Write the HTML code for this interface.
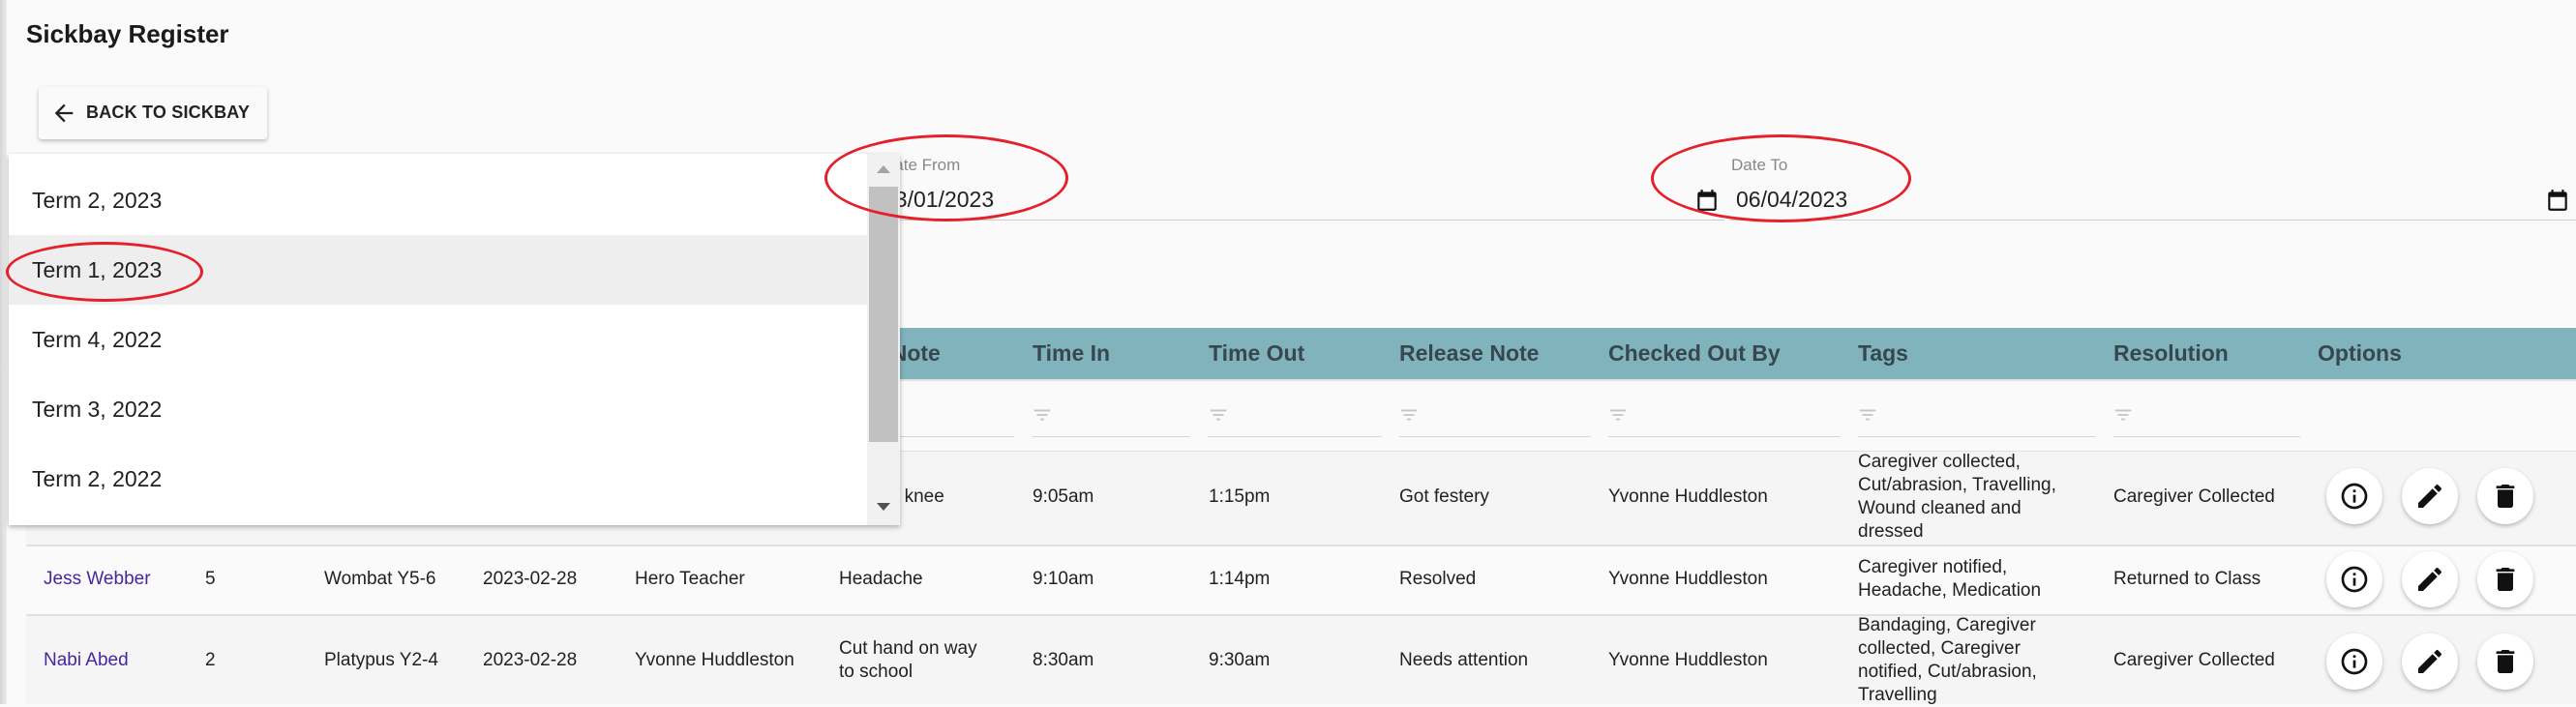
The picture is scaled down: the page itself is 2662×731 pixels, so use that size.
<!DOCTYPE html>
<html><head><meta charset="utf-8"><style>
*{margin:0;padding:0;box-sizing:border-box}
body{width:2662px;height:728px;overflow:hidden;background:#fafafa;font-family:"Liberation Sans",sans-serif;color:#212121;position:relative}
.a{position:absolute;white-space:nowrap}
.t{font-size:19px;line-height:24px}
.h{font-size:23px;font-weight:bold;color:#37474f;top:352px}
.ul{position:absolute;top:451px;height:1px;background:#d6d6d6}
.fi{position:absolute;top:418px}
.btn{position:absolute;width:58px;height:58px;border-radius:50%;background:#fff;box-shadow:0 2px 4px rgba(0,0,0,.25);display:flex;align-items:center;justify-content:center}
.term{position:absolute;left:33px;font-size:23px;line-height:72px;height:72px;width:880px}
.ell{position:absolute;border:3px solid #e3212b;border-radius:50%}
</style></head><body>
<div class="a" style="left:0;top:0;width:7px;height:728px;background:linear-gradient(90deg,#d5d5d5,#ececec)"></div>
<div class="a" style="left:27px;top:20px;font-size:26px;font-weight:bold;color:#1a1a1a">Sickbay Register</div>
<div class="a" style="left:40px;top:90px;width:236px;height:54px;background:#fafafa;box-shadow:0 2px 4px rgba(0,0,0,.25);border-radius:3px"></div>
<svg class="a" style="left:52px;top:103px" width="28" height="28" viewBox="0 0 24 24"><path d="M20 11H7.83l5.59-5.59L12 4l-8 8 8 8 1.41-1.41L7.83 13H20v-2z" fill="#222"/></svg>
<div class="a" style="left:89px;top:106px;font-size:18px;font-weight:bold;color:#222;letter-spacing:0.2px">BACK TO SICKBAY</div>

<div class="a" style="left:912px;top:161px;font-size:17px;color:#888">Date From</div>
<div class="a" style="left:912px;top:193px;font-size:23px;color:#222">13/01/2023</div>
<div class="a" style="left:900px;top:227px;width:882px;height:1px;background:#ccc"></div>
<div class="a" style="left:1789px;top:161px;font-size:17px;color:#888">Date To</div>
<svg class="a" style="left:1751px;top:194px" width="26" height="26" viewBox="0 0 24 24"><path d="M19 4h-1V2h-2v2H8V2H6v2H5c-1.1 0-2 .9-2 2v14c0 1.1.9 2 2 2h14c1.1 0 2-.9 2-2V6c0-1.1-.9-2-2-2zm0 16H5V9h14v11z" fill="#111"/></svg>
<div class="a" style="left:1794px;top:193px;font-size:23px;color:#222">06/04/2023</div>
<svg class="a" style="left:2630px;top:194px" width="26" height="26" viewBox="0 0 24 24"><path d="M19 4h-1V2h-2v2H8V2H6v2H5c-1.1 0-2 .9-2 2v14c0 1.1.9 2 2 2h14c1.1 0 2-.9 2-2V6c0-1.1-.9-2-2-2zm0 16H5V9h14v11z" fill="#111"/></svg>
<div class="a" style="left:1787px;top:227px;width:875px;height:1px;background:#ccc"></div>

<div class="a" style="left:27px;top:339px;width:2635px;height:55px;background:#81b3bd;border-bottom:2px solid #e3e3e3"></div>
<div class="a h" style="left:45px">Name</div><div class="a h" style="left:212px">Year</div><div class="a h" style="left:335px">Class</div><div class="a h" style="left:499px">Date</div><div class="a h" style="left:656px">Staff</div>
<div class="a h" style="left:867px">Sick Note</div>
<div class="a h" style="left:1067px">Time In</div><div class="a h" style="left:1249px">Time Out</div><div class="a h" style="left:1446px">Release Note</div><div class="a h" style="left:1662px">Checked Out By</div><div class="a h" style="left:1920px">Tags</div><div class="a h" style="left:2184px">Resolution</div><div class="a h" style="left:2395px">Options</div>

<div class="ul" style="left:867px;width:181px"></div>
<div class="ul" style="left:1067px;width:163px"></div>
<div class="ul" style="left:1248px;width:180px"></div>
<div class="ul" style="left:1446px;width:198px"></div>
<div class="ul" style="left:1662px;width:240px"></div>
<div class="ul" style="left:1920px;width:246px"></div>
<div class="ul" style="left:2184px;width:193px"></div>
<svg class="fi" style="left:1066px" width="22" height="22" viewBox="0 0 24 24"><path d="M10 18h4v-2h-4v2zM3 6v2h18V6H3zm3 7h12v-2H6v2z" fill="#c4c4c4"/></svg>
<svg class="fi" style="left:1248px" width="22" height="22" viewBox="0 0 24 24"><path d="M10 18h4v-2h-4v2zM3 6v2h18V6H3zm3 7h12v-2H6v2z" fill="#c4c4c4"/></svg>
<svg class="fi" style="left:1445px" width="22" height="22" viewBox="0 0 24 24"><path d="M10 18h4v-2h-4v2zM3 6v2h18V6H3zm3 7h12v-2H6v2z" fill="#c4c4c4"/></svg>
<svg class="fi" style="left:1661px" width="22" height="22" viewBox="0 0 24 24"><path d="M10 18h4v-2h-4v2zM3 6v2h18V6H3zm3 7h12v-2H6v2z" fill="#c4c4c4"/></svg>
<svg class="fi" style="left:1919px" width="22" height="22" viewBox="0 0 24 24"><path d="M10 18h4v-2h-4v2zM3 6v2h18V6H3zm3 7h12v-2H6v2z" fill="#c4c4c4"/></svg>
<svg class="fi" style="left:2183px" width="22" height="22" viewBox="0 0 24 24"><path d="M10 18h4v-2h-4v2zM3 6v2h18V6H3zm3 7h12v-2H6v2z" fill="#c4c4c4"/></svg>

<div class="a" style="left:27px;top:466px;width:2635px;height:97px;background:#f5f5f5;border-top:1px solid #e0e0e0"></div>
<div class="a" style="left:27px;top:563px;width:2635px;height:72px;background:#fafafa;border-top:2px solid #e0e0e0"></div>
<div class="a" style="left:27px;top:635px;width:2635px;height:93px;background:#f5f5f5;border-top:2px solid #e0e0e0"></div>

<div class="a t" style="left:867px;top:502px">Grazed knee</div>
<div class="a t" style="left:1067px;top:502px">9:05am</div>
<div class="a t" style="left:1249px;top:502px">1:15pm</div>
<div class="a t" style="left:1446px;top:502px">Got festery</div>
<div class="a t" style="left:1662px;top:502px">Yvonne Huddleston</div>
<div class="a t" style="left:1920px;top:466px">Caregiver collected,<br>Cut/abrasion, Travelling,<br>Wound cleaned and<br>dressed</div>
<div class="a t" style="left:2184px;top:502px">Caregiver Collected</div>

<div class="a t" style="left:45px;top:587px;color:#4527a0">Jess Webber</div>
<div class="a t" style="left:212px;top:587px">5</div>
<div class="a t" style="left:335px;top:587px">Wombat Y5-6</div>
<div class="a t" style="left:499px;top:587px">2023-02-28</div>
<div class="a t" style="left:656px;top:587px">Hero Teacher</div>
<div class="a t" style="left:867px;top:587px">Headache</div>
<div class="a t" style="left:1067px;top:587px">9:10am</div>
<div class="a t" style="left:1249px;top:587px">1:14pm</div>
<div class="a t" style="left:1446px;top:587px">Resolved</div>
<div class="a t" style="left:1662px;top:587px">Yvonne Huddleston</div>
<div class="a t" style="left:1920px;top:575px">Caregiver notified,<br>Headache, Medication</div>
<div class="a t" style="left:2184px;top:587px">Returned to Class</div>

<div class="a t" style="left:45px;top:671px;color:#4527a0">Nabi Abed</div>
<div class="a t" style="left:212px;top:671px">2</div>
<div class="a t" style="left:335px;top:671px">Platypus Y2-4</div>
<div class="a t" style="left:499px;top:671px">2023-02-28</div>
<div class="a t" style="left:656px;top:671px">Yvonne Huddleston</div>
<div class="a t" style="left:867px;top:659px">Cut hand on way<br>to school</div>
<div class="a t" style="left:1067px;top:671px">8:30am</div>
<div class="a t" style="left:1249px;top:671px">9:30am</div>
<div class="a t" style="left:1446px;top:671px">Needs attention</div>
<div class="a t" style="left:1662px;top:671px">Yvonne Huddleston</div>
<div class="a t" style="left:1920px;top:635px">Bandaging, Caregiver<br>collected, Caregiver<br>notified, Cut/abrasion,<br>Travelling</div>
<div class="a t" style="left:2184px;top:671px">Caregiver Collected</div>

<div class="btn" style="left:2404px;top:484px"><svg width="32" height="32" viewBox="0 0 24 24"><path d="M11 7h2v2h-2zm0 4h2v6h-2zm1-9C6.48 2 2 6.48 2 12s4.48 10 10 10 10-4.48 10-10S17.52 2 12 2zm0 18c-4.41 0-8-3.59-8-8s3.59-8 8-8 8 3.59 8 8-3.59 8-8 8z" fill="#111"/></svg></div>
<div class="btn" style="left:2482px;top:484px"><svg width="32" height="32" viewBox="0 0 24 24"><path d="M3 17.25V21h3.75L17.81 9.94l-3.75-3.75L3 17.25zM20.71 7.04c.39-.39.39-1.02 0-1.41l-2.34-2.34a1 1 0 0 0-1.41 0l-1.83 1.83 3.75 3.75 1.83-1.83z" fill="#111"/></svg></div>
<div class="btn" style="left:2560px;top:484px"><svg width="32" height="32" viewBox="0 0 24 24"><path d="M6 19c0 1.1.9 2 2 2h8c1.1 0 2-.9 2-2V7H6v12zM19 4h-3.5l-1-1h-5l-1 1H5v2h14V4z" fill="#111"/></svg></div>
<div class="btn" style="left:2404px;top:570px"><svg width="32" height="32" viewBox="0 0 24 24"><path d="M11 7h2v2h-2zm0 4h2v6h-2zm1-9C6.48 2 2 6.48 2 12s4.48 10 10 10 10-4.48 10-10S17.52 2 12 2zm0 18c-4.41 0-8-3.59-8-8s3.590-8 8-8 8 3.59 8 8-3.59 8-8 8z" fill="#111"/></svg></div>
<div class="btn" style="left:2482px;top:570px"><svg width="32" height="32" viewBox="0 0 24 24"><path d="M3 17.25V21h3.75L17.81 9.94l-3.75-3.75L3 17.25zM20.71 7.04c.39-.39.39-1.020 0-1.41l-2.34-2.34a1 1 0 0 0-1.41 0l-1.83 1.83 3.75 3.75 1.83-1.83z" fill="#111"/></svg></div>
<div class="btn" style="left:2560px;top:570px"><svg width="32" height="32" viewBox="0 0 24 24"><path d="M6 19c0 1.1.9 2 2 2h8c1.1 0 2-.9 2-2V7H6v12zM19 4h-3.5l-1-1h-5l-1 1H5v2h14V4z" fill="#111"/></svg></div>
<div class="btn" style="left:2404px;top:655px"><svg width="32" height="32" viewBox="0 0 24 24"><path d="M11 7h2v2h-2zm0 4h2v6h-2zm1-9C6.48 2 2 6.48 2 12s4.48 10 10 10 10-4.48 10-10S17.52 2 12 2zm0 18c-4.41 0-8-3.59-8-8s3.59-8 8-8 8 3.59 8 8-3.59 8-8 8z" fill="#111"/></svg></div>
<div class="btn" style="left:2482px;top:655px"><svg width="32" height="32" viewBox="0 0 24 24"><path d="M3 17.25V21h3.75L17.81 9.94l-3.75-3.75L3 17.25zM20.71 7.04c.39-.39.39-1.02 0-1.41l-2.34-2.34a1 1 0 0 0-1.41 0l-1.83 1.83 3.75 3.75 1.83-1.83z" fill="#111"/></svg></div>
<div class="btn" style="left:2560px;top:655px"><svg width="32" height="32" viewBox="0 0 24 24"><path d="M6 19c0 1.1.9 2 2 2h8c1.1 0 2-.9 2-2V7H6v12zM19 4h-3.5l-1-1h-5l-1 1H5v2h14V4z" fill="#111"/></svg></div>

<div class="a" style="left:9px;top:159px;width:921px;height:384px;background:#fff;box-shadow:0 2px 5px rgba(0,0,0,.3);overflow:hidden">
  <div class="term" style="left:24px;top:12px">Term 2, 2023</div>
  <div class="a" style="left:0;top:84px;width:887px;height:72px;background:#eeeeee"></div>
  <div class="term" style="left:24px;top:84px">Term 1, 2023</div>
  <div class="term" style="left:24px;top:156px">Term 4, 2022</div>
  <div class="term" style="left:24px;top:228px">Term 3, 2022</div>
  <div class="term" style="left:24px;top:300px">Term 2, 2022</div>
  <div class="a" style="left:887px;top:0;width:34px;height:384px;background:#f1f1f1"></div>
  <div class="a" style="left:889px;top:34px;width:30px;height:264px;background:#c1c1c1"></div>
  <div class="a" style="left:897px;top:12px;width:0;height:0;border-left:7px solid transparent;border-right:7px solid transparent;border-bottom:8px solid #a3a3a3"></div>
  <div class="a" style="left:897px;top:361px;width:0;height:0;border-left:7px solid transparent;border-right:7px solid transparent;border-top:8px solid #505050"></div>
</div>

<div class="ell" style="left:852px;top:139px;width:252px;height:90px"></div>
<div class="ell" style="left:1706px;top:139px;width:269px;height:91px"></div>
<div class="ell" style="left:6px;top:250px;width:204px;height:62px"></div>
</body></html>
